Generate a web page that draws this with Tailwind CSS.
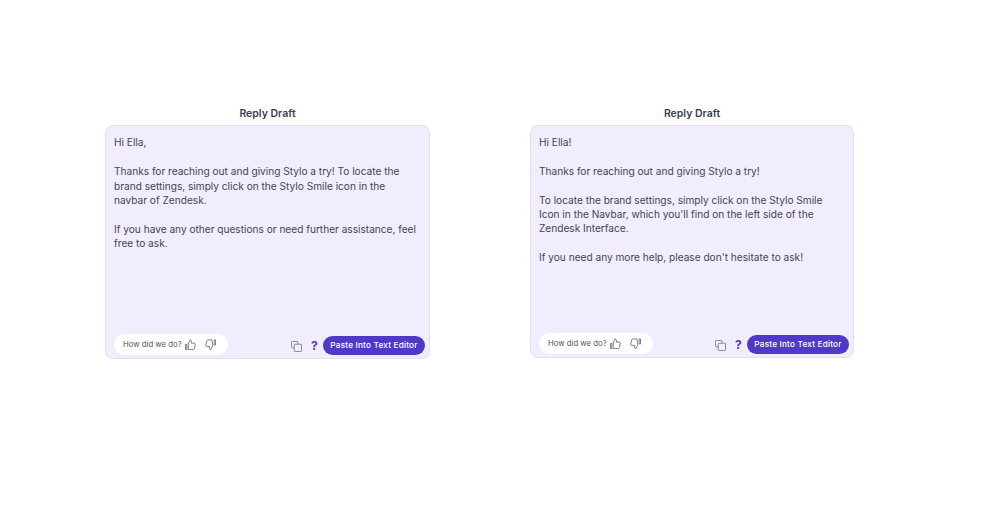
<!DOCTYPE html>
<html lang="en">
  <head>
    <meta charset="UTF-8" />
    <title>Reply Drafts</title>
    <script src="https://cdn.jsdelivr.net/npm/@tailwindcss/browser@4"></script>
  </head>
  <body class="bg-white font-['Inter',sans-serif] h-[523px] overflow-hidden">
    <div class="flex gap-[100px] pl-[105px] pt-[107px]">
      <!-- Left draft -->
      <section class="w-[325px]">
        <h2 class="text-center text-[10.5px] leading-[14px] font-semibold text-[#374151] mb-[4px]">Reply Draft</h2>
        <div class="h-[234px] rounded-lg border border-[#e1ddf2] bg-[#f1edfe] flex flex-col justify-between pl-2 pr-1 pb-[3px]">
          <div class="pt-[9.4px] pr-2 text-[10.12px] leading-[14.4px] text-[#3f4654]">
            <p>Hi Ella,</p>
            <p class="mt-[14.4px]">Thanks for reaching out and giving Stylo a try! To locate the brand settings, simply click on the Stylo Smile icon in the navbar of Zendesk.</p>
            <p class="mt-[14.4px]">If you have any other questions or need further assistance, feel free to ask.</p>
          </div>
          <div class="flex items-end justify-between">
            <div class="flex items-center h-[21px] w-[114px] rounded-full bg-white pl-[9px]">
              <span class="text-[7.75px] text-[#4b5563] whitespace-nowrap">How did we do?</span>
              <svg class="ml-[3px] w-[11px] h-[11px] text-[#4b5563]" viewBox="0 0 12 12" fill="none" stroke="currentColor" stroke-width="0.8"><path d="M.5 6h1.500v5.500H.5zM3.500 5.500 5.500 1c.9 0 1.500.6 1.500 1.500V4.500h3.200c.7 0 1.200.6 1 1.300l-1 4.700c-.2.6-.6 1-1.200 1H3.500z"/></svg>
              <svg class="ml-[9px] w-[11px] h-[11px] text-[#4b5563]" viewBox="0 0 12 12" fill="none" stroke="currentColor" stroke-width="0.8"><path d="M11.500 6.500H10V1h1.500zM8.500 7 6.500 11.500c-.9 0-1.500-.6-1.500-1.500V8H1.800c-.7 0-1.200-.6-1-1.300l1-4.700c.2-.6.6-1 1.200-1h4.500z"/></svg>
            </div>
            <div class="flex items-center">
              <svg class="mt-[2px] w-[11px] h-[11px] text-[#6b7280]" viewBox="0 0 12 12" fill="none" stroke="currentColor" stroke-width="0.9"><path d="M7.500 3V1.500a1 1 0 0 0-1-1h-5a1 1 0 0 0-1 1v5a1 1 0 0 0 1 1H3"/><rect x="3.500" y="3.500" width="8" height="8" rx="1"/></svg>
              <span class="ml-[9px] w-[6px] text-[12px] leading-none font-bold text-[#4f39c9]">?</span>
              <button class="ml-[6px] h-[19px] w-[102px] rounded-full bg-[#4f39c9] text-white text-[8.2px] font-medium tracking-[0.2px] whitespace-nowrap">Paste Into Text Editor</button>
            </div>
          </div>
        </div>
      </section>

      <!-- Right draft -->
      <section class="w-[324px]">
        <h2 class="text-center text-[10.5px] leading-[14px] font-semibold text-[#374151] mb-[4px]">Reply Draft</h2>
        <div class="h-[233px] rounded-lg border border-[#e1ddf2] bg-[#f1edfe] flex flex-col justify-between pl-2 pr-1 pb-[3px]">
          <div class="pt-[9px] pr-2 text-[10.12px] leading-[14.4px] text-[#3f4654]">
            <p>Hi Ella!</p>
            <p class="mt-[14.4px]">Thanks for reaching out and giving Stylo a try!</p>
            <p class="mt-[14.4px]">To locate the brand settings, simply click on the Stylo Smile Icon in the Navbar, which you'll find on the left side of the Zendesk Interface.</p>
            <p class="mt-[14.4px]">If you need any more help, please don't hesitate to ask!</p>
          </div>
          <div class="flex items-end justify-between">
            <div class="flex items-center h-[21px] w-[114px] rounded-full bg-white pl-[9px]">
              <span class="text-[7.75px] text-[#4b5563] whitespace-nowrap">How did we do?</span>
              <svg class="ml-[3px] w-[11px] h-[11px] text-[#4b5563]" viewBox="0 0 12 12" fill="none" stroke="currentColor" stroke-width="0.8"><path d="M.5 6h1.500v5.500H.5zM3.500 5.500 5.500 1c.9 0 1.500.6 1.500 1.500V4.500h3.200c.7 0 1.200.6 1 1.300l-1 4.700c-.2.6-.6 1-1.200 1H3.500z"/></svg>
              <svg class="ml-[9px] w-[11px] h-[11px] text-[#4b5563]" viewBox="0 0 12 12" fill="none" stroke="currentColor" stroke-width="0.8"><path d="M11.500 6.500H10V1h1.500zM8.500 7 6.500 11.500c-.9 0-1.500-.6-1.500-1.500V8H1.800c-.7 0-1.200-.6-1-1.300l1-4.700c.2-.6.6-1 1.200-1h4.500z"/></svg>
            </div>
            <div class="flex items-center">
              <svg class="mt-[2px] w-[11px] h-[11px] text-[#6b7280]" viewBox="0 0 12 12" fill="none" stroke="currentColor" stroke-width="0.9"><path d="M7.500 3V1.500a1 1 0 0 0-1-1h-5a1 1 0 0 0-1 1v5a1 1 0 0 0 1 1H3"/><rect x="3.500" y="3.500" width="8" height="8" rx="1"/></svg>
              <span class="ml-[9px] w-[6px] text-[12px] leading-none font-bold text-[#4f39c9]">?</span>
              <button class="ml-[6px] h-[19px] w-[102px] rounded-full bg-[#4f39c9] text-white text-[8.2px] font-medium tracking-[0.2px] whitespace-nowrap">Paste Into Text Editor</button>
            </div>
          </div>
        </div>
      </section>
    </div>
  </body>
</html>
